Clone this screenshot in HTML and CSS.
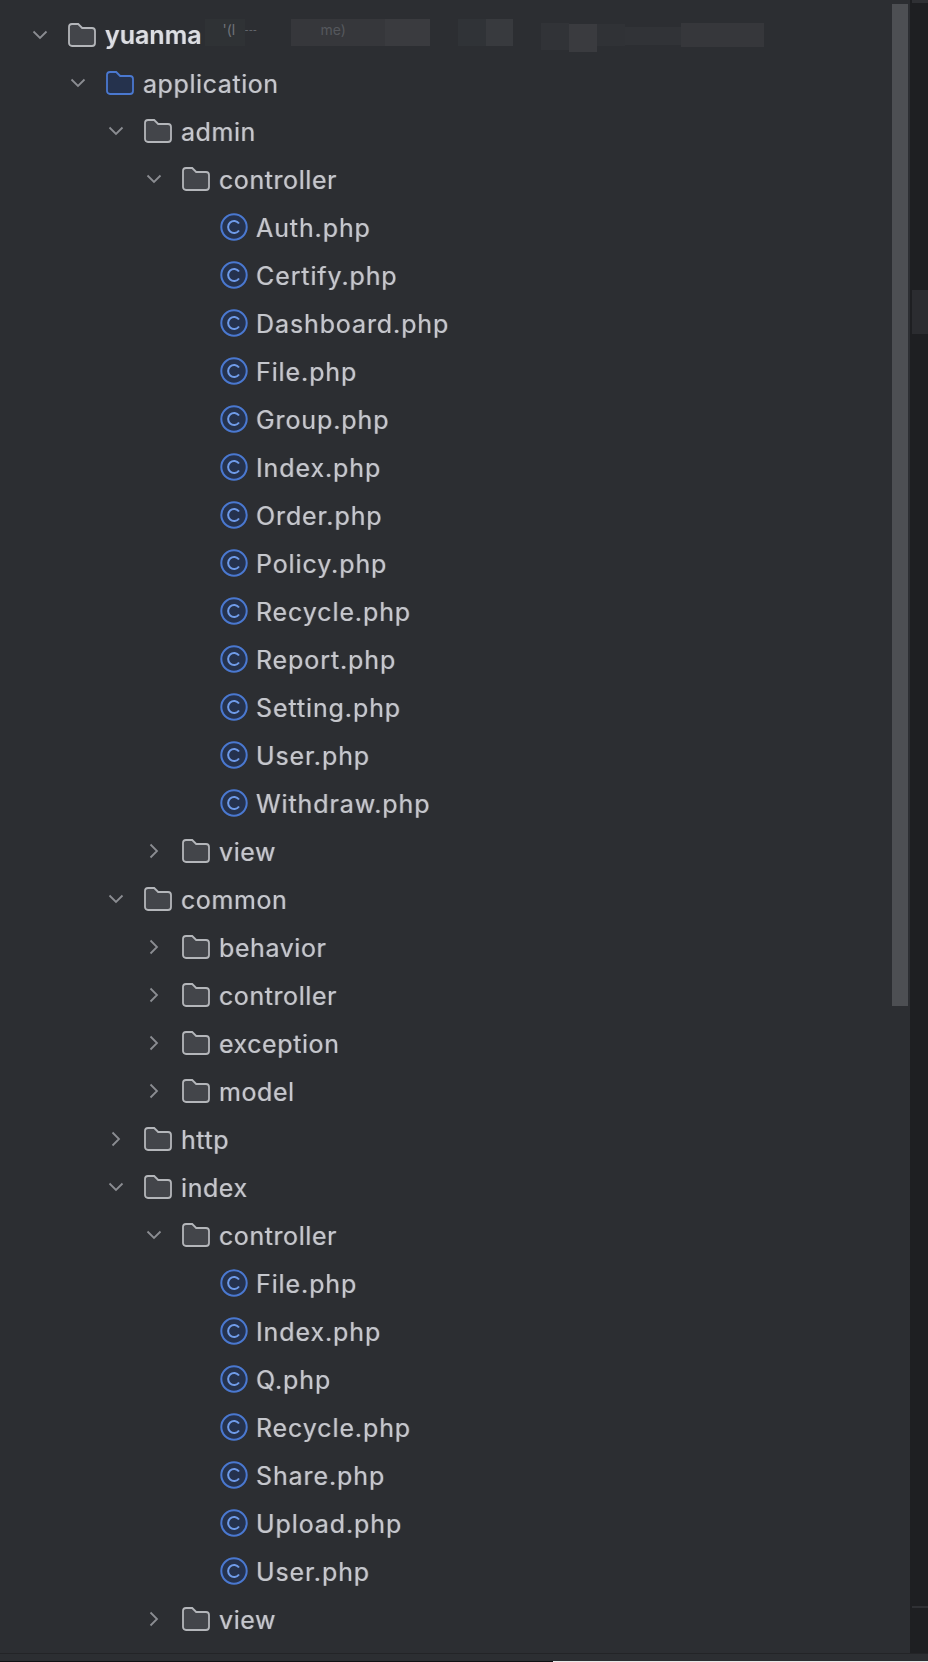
FILE: index.html
```html
<!DOCTYPE html>
<html lang="en">
<head>
<meta charset="utf-8">
<title>Project tree</title>
<link rel="stylesheet" href="styles.css">
</head>
<body>
<svg class="defs" width="0" height="0" aria-hidden="true">
  <symbol id="open" viewBox="0 0 16 16"><path d="M1.500 4.500 8 11l6.500-6.500" fill="none" stroke="currentColor" stroke-width="1.800"/></symbol>
  <symbol id="closed" viewBox="0 0 16 16"><path d="M4.500 1.500 11 8l-6.500 6.500" fill="none" stroke="currentColor" stroke-width="1.800"/></symbol>
  <symbol id="folder" viewBox="0 0 28 24"><path d="M1 4a3 3 0 0 1 3-3h6.200l4 4H24a3 3 0 0 1 3 3v12a3 3 0 0 1-3 3H4a3 3 0 0 1-3-3z" fill="#43454a" stroke="#b4b6ba" stroke-width="1.800"/></symbol>
  <symbol id="folder-blue" viewBox="0 0 28 24"><path d="M1 4a3 3 0 0 1 3-3h6.200l4 4H24a3 3 0 0 1 3 3v12a3 3 0 0 1-3 3H4a3 3 0 0 1-3-3z" fill="#25324d" stroke="#4a78d0" stroke-width="1.800"/></symbol>
  <symbol id="class" viewBox="0 0 28 28"><circle cx="14" cy="14" r="12.700" fill="#25324d" stroke="#4a78d0" stroke-width="2"/><path d="M19 10.500a6 6 0 1 0 0 7" fill="none" stroke="#6f9be8" stroke-width="2"/></symbol>
</svg>
<main class="window">
  <div class="panel">
    <ul class="tree">
      <li class="row d0"><svg class="chev"><use href="#open"/></svg><svg class="folder"><use href="#folder"/></svg><span class="name root">yuanma</span><span class="blur"><i class="b b1">'(l</i><i class="b b2">---</i><i class="b b3">me)</i><i class="b b4"></i><i class="b b5"></i><i class="b b6"></i><i class="b b7"></i><i class="b b8"></i><i class="b b9"></i><i class="b b10"></i><i class="b b10a"></i><i class="b b11"></i><i class="b b12"></i></span></li>
      <li class="row d1"><svg class="chev"><use href="#open"/></svg><svg class="folder"><use href="#folder-blue"/></svg><span class="name">application</span></li>
      <li class="row d2"><svg class="chev"><use href="#open"/></svg><svg class="folder"><use href="#folder"/></svg><span class="name">admin</span></li>
      <li class="row d3"><svg class="chev"><use href="#open"/></svg><svg class="folder"><use href="#folder"/></svg><span class="name">controller</span></li>
      <li class="row file"><svg class="cls"><use href="#class"/></svg><span class="name">Auth.php</span></li>
      <li class="row file"><svg class="cls"><use href="#class"/></svg><span class="name">Certify.php</span></li>
      <li class="row file"><svg class="cls"><use href="#class"/></svg><span class="name">Dashboard.php</span></li>
      <li class="row file"><svg class="cls"><use href="#class"/></svg><span class="name">File.php</span></li>
      <li class="row file"><svg class="cls"><use href="#class"/></svg><span class="name">Group.php</span></li>
      <li class="row file"><svg class="cls"><use href="#class"/></svg><span class="name">Index.php</span></li>
      <li class="row file"><svg class="cls"><use href="#class"/></svg><span class="name">Order.php</span></li>
      <li class="row file"><svg class="cls"><use href="#class"/></svg><span class="name">Policy.php</span></li>
      <li class="row file"><svg class="cls"><use href="#class"/></svg><span class="name">Recycle.php</span></li>
      <li class="row file"><svg class="cls"><use href="#class"/></svg><span class="name">Report.php</span></li>
      <li class="row file"><svg class="cls"><use href="#class"/></svg><span class="name">Setting.php</span></li>
      <li class="row file"><svg class="cls"><use href="#class"/></svg><span class="name">User.php</span></li>
      <li class="row file"><svg class="cls"><use href="#class"/></svg><span class="name">Withdraw.php</span></li>
      <li class="row d3"><svg class="chev"><use href="#closed"/></svg><svg class="folder"><use href="#folder"/></svg><span class="name">view</span></li>
      <li class="row d2"><svg class="chev"><use href="#open"/></svg><svg class="folder"><use href="#folder"/></svg><span class="name">common</span></li>
      <li class="row d3"><svg class="chev"><use href="#closed"/></svg><svg class="folder"><use href="#folder"/></svg><span class="name">behavior</span></li>
      <li class="row d3"><svg class="chev"><use href="#closed"/></svg><svg class="folder"><use href="#folder"/></svg><span class="name">controller</span></li>
      <li class="row d3"><svg class="chev"><use href="#closed"/></svg><svg class="folder"><use href="#folder"/></svg><span class="name">exception</span></li>
      <li class="row d3"><svg class="chev"><use href="#closed"/></svg><svg class="folder"><use href="#folder"/></svg><span class="name">model</span></li>
      <li class="row d2"><svg class="chev"><use href="#closed"/></svg><svg class="folder"><use href="#folder"/></svg><span class="name">http</span></li>
      <li class="row d2"><svg class="chev"><use href="#open"/></svg><svg class="folder"><use href="#folder"/></svg><span class="name">index</span></li>
      <li class="row d3"><svg class="chev"><use href="#open"/></svg><svg class="folder"><use href="#folder"/></svg><span class="name">controller</span></li>
      <li class="row file"><svg class="cls"><use href="#class"/></svg><span class="name">File.php</span></li>
      <li class="row file"><svg class="cls"><use href="#class"/></svg><span class="name">Index.php</span></li>
      <li class="row file"><svg class="cls"><use href="#class"/></svg><span class="name">Q.php</span></li>
      <li class="row file"><svg class="cls"><use href="#class"/></svg><span class="name">Recycle.php</span></li>
      <li class="row file"><svg class="cls"><use href="#class"/></svg><span class="name">Share.php</span></li>
      <li class="row file"><svg class="cls"><use href="#class"/></svg><span class="name">Upload.php</span></li>
      <li class="row file"><svg class="cls"><use href="#class"/></svg><span class="name">User.php</span></li>
      <li class="row d3"><svg class="chev"><use href="#closed"/></svg><svg class="folder"><use href="#folder"/></svg><span class="name">view</span></li>
    </ul>
    <div class="scroll"><div class="thumb"></div></div>
    <div class="gutter"><div class="cap"></div><div class="marker"></div><div class="tick"></div></div>
  </div>
  <div class="statusline"><div class="dark"></div><div class="light"></div></div>
</main>
</body>
</html>
```
FILE: styles.css
```css
* { box-sizing: border-box; }
html, body { margin: 0; padding: 0; }
body { width: 928px; height: 1662px; overflow: hidden; background: #2c2e32; font-family: Inter, "Noto Sans", sans-serif; }
.defs { position: absolute; }
.window { display: flex; flex-direction: column; height: 1662px; }
.panel { flex: 1; display: flex; min-height: 0; }
.tree { flex: 1; min-width: 0; margin: 0; padding: 11px 0 0; list-style: none; }
.row { display: flex; align-items: center; height: 48px; color: #c5c7cc; }
.d0 { padding-left: 32px; }
.d1 { padding-left: 70px; }
.d2 { padding-left: 108px; }
.d3 { padding-left: 146px; }
.file { padding-left: 220px; }
.chev { width: 16px; height: 16px; color: #8b8d92; flex: none; margin-right: 20px; }
.folder { width: 28px; height: 24px; flex: none; margin-right: 9px; }
.cls { width: 28px; height: 28px; flex: none; margin-right: 8px; }
.name { font-size: 25px; line-height: 30px; padding-top: 2px; letter-spacing: 0.58px; white-space: nowrap; filter: blur(0.4px); text-shadow: -0.7px 0 rgba(90, 140, 220, 0.42), 0.7px 0 rgba(220, 160, 90, 0.42); }
.file .name { letter-spacing: 0.9px; }
.root { font-weight: 600; letter-spacing: 0; color: #dcdee2; padding-top: 0; }
.blur { display: flex; align-items: flex-start; align-self: flex-start; margin-left: 3px; padding-top: 8px; }
.b { display: block; height: 27px; font-style: normal; font-size: 14px; line-height: 22px; color: #6f7279; overflow: hidden; background: #36373b; }
.b1 { width: 40px; background: #2f3235; padding-left: 18px; }
.b2 { width: 38px; margin-right: 8px; background: #2c2e32; font-size: 9px; }
.b3 { width: 94px; background: #36373b; padding-left: 30px; color: #55575d; }
.b4 { width: 45px; background: #3a3b3f; }
.b5 { width: 28px; background: #2c2e32; }
.b6 { width: 28px; background: #303337; }
.b7 { width: 27px; background: #383a3e; }
.b8 { width: 28px; background: #2c2e32; }
.b9 { width: 28px; background: #313337; margin-top: 4px; }
.b10 { width: 28px; background: #3a3b3f; margin-top: 5px; height: 28px; }
.b10a { width: 28px; background: #303236; margin-top: 5px; height: 22px; }
.b11 { width: 56px; background: #313337; margin-top: 8px; height: 18px; }
.b12 { width: 83px; background: #36373b; margin-top: 4px; height: 24px; }
.scroll { width: 18px; flex: none; padding: 4px 2px 0 0; }
.thumb { width: 16px; height: 1002px; background: #4d4f53; }
.gutter { width: 18px; flex: none; display: flex; flex-direction: column; background: #1e1f22; padding-left: 2px; }
.cap { height: 3px; background: #2f3034; }
.marker { height: 44px; margin-top: 287px; background: #2b2c30; }
.tick { height: 2px; margin-top: 1272px; background: #2f3034; }
.statusline { flex: none; height: 9px; display: flex; align-items: flex-end; background: #2c2e32; border-top: 1px solid #232427; }
.dark { width: 553px; height: 1px; background: #101114; }
.light { flex: 1; height: 1px; background: #e8e8e8; }
```
